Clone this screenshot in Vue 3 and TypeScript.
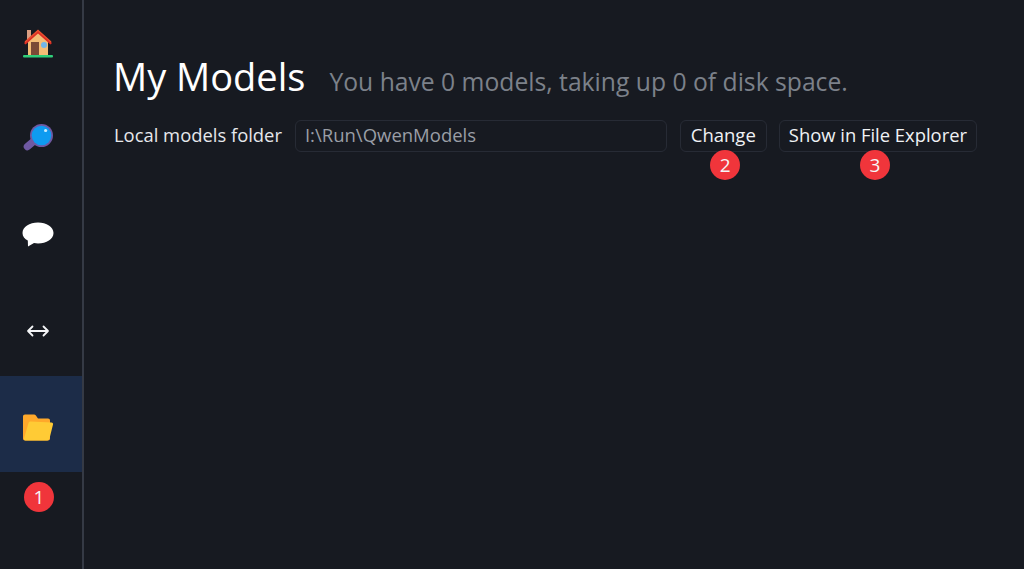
<template>
	<div class="app">
		<nav class="sidebar" aria-label="Main navigation">
			<div
				v-for="item in navItems"
				:key="item.id"
				class="nav-item"
				:class="{ 'nav-active': item.id === activeId }"
			>
				<svg v-if="item.id === 'home'" class="nav-icon" viewBox="0 0 32 32">
					<rect x="5" y="3" width="4" height="10" fill="#d99e82" />
					<path d="M6 14 16 5l10 9v14H6z" fill="#f4bd76" />
					<path d="M2 16 16 3l14 13-1.600 1.600L16 6.400 3.600 17.600z" fill="#dd2e24" />
					<path d="M3 15 16 3.500 29 15" fill="none" stroke="#e8502f" stroke-width="1.400" />
					<rect x="9" y="15" width="8" height="13" fill="#7b4a36" />
					<circle cx="22" cy="18" r="3" fill="#6fb6ea" />
					<rect x="1" y="28" width="30" height="2.400" rx="1" fill="#2fce7a" />
				</svg>
				<svg v-else-if="item.id === 'search'" class="nav-icon" viewBox="0 0 32 32">
					<path d="M12 18 5.500 23.500" stroke="#6f59a3" stroke-width="7.500" stroke-linecap="round" />
					<circle cx="19.500" cy="12.500" r="11.500" fill="#6f59a3" />
					<circle cx="19.500" cy="12.500" r="9.800" fill="#0e9bf0" />
					<circle cx="23.600" cy="7.500" r="1.600" fill="#c9ecff" />
				</svg>
				<svg v-else-if="item.id === 'chat'" class="nav-icon" viewBox="0 0 32 32">
					<path d="M16 3.500C7.500 3.500.5 8 .5 14c0 3.400 2.200 6 5.300 7.600l.2 5.900 6-3.400c1.300.3 2.700.4 4 .4 8.500 0 15.500-4.600 15.500-10.500S24.500 3.500 16 3.500z" fill="#fff" />
				</svg>
				<svg v-else-if="item.id === 'compare'" class="nav-icon" viewBox="0 0 32 32">
					<path d="M6 16h20M10.500 11.500 6 16l4.500 4.500M21.500 11.500 26 16l-4.500 4.500" fill="none" stroke="#f4f5f7" stroke-width="1.800" stroke-linecap="round" stroke-linejoin="round" />
				</svg>
				<svg v-else class="nav-icon" viewBox="0 0 32 32">
					<path d="M1 5.500c0-1.200.8-2 2-2h9c.8 0 1.400.3 1.900 1L16 7.500h10c1.200 0 2 .8 2 2v18c0 1.200-.8 2-2 2H3c-1.200 0-2-.8-2-2z" fill="#ffa92b" />
					<path d="M6.500 12c.3-1 1-1.500 2-1.500l21 1c1.200 0 1.800 1 1.500 2l-3.500 14c-.3 1.200-1.100 2-2.300 2H3.500c-1.200 0-1.800-.8-1.500-2z" fill="#ffcb35" />
				</svg>
			</div>
			<span class="step-badge badge-folder">1</span>
		</nav>

		<main class="content">
			<header class="page-head">
				<h1 class="page-title">My Models</h1>
				<span class="page-summary">You have {{ modelCount }} models, taking up {{ diskUsed }} of disk space.</span>
			</header>
			<div class="folder-row">
				<label class="folder-label" for="folder">Local models folder</label>
				<input id="folder" class="folder-input" type="text" :value="folderPath" />
				<button class="btn btn-change" type="button">
					Change
					<span class="step-badge badge-change">2</span>
				</button>
				<button class="btn btn-explorer" type="button">
					Show in File Explorer
					<span class="step-badge badge-explorer">3</span>
				</button>
			</div>
		</main>
	</div>
</template>

<script setup lang="ts">
type NavItem = {
	id: string
}

const navItems: NavItem[] = [
	{ id: 'home' },
	{ id: 'search' },
	{ id: 'chat' },
	{ id: 'compare' },
	{ id: 'models' },
]

const activeId = 'models'
const modelCount = 0
const diskUsed = '0'
const folderPath = 'I:\\Run\\QwenModels'
</script>

<style>
html,
body {
	margin: 0;
	background: #171a21;
	overflow: hidden;
}
</style>

<style scoped>
.app {
	display: flex;
	height: 569px;
	background: #171a21;
	color: #f0f2f5;
	font-family: "Open Sans", "Noto Sans", sans-serif;
	overflow: hidden;
}

.sidebar {
	position: relative;
	flex: none;
	width: 82px;
	border-right: 2px solid #353a45;
}

.nav-item {
	display: flex;
	align-items: center;
	justify-content: center;
	height: 96px;
	transform: translateY(-8px);
}

.nav-active {
	background: #1c2c48;
}

.nav-icon {
	width: 32px;
	height: 32px;
	margin: 5px 0 0 -6px;
}

.step-badge {
	position: absolute;
	display: flex;
	align-items: center;
	justify-content: center;
	width: 30px;
	height: 30px;
	border-radius: 50%;
	background: #f0353b;
	color: #f6f6f6;
	font-size: 19px;
	line-height: 1;
}

.badge-folder {
	left: 24px;
	top: 482px;
}

.badge-change,
.badge-explorer {
	left: 50%;
	top: 29px;
}

.badge-change {
	margin-left: -13px;
}

.badge-explorer {
	margin-left: -18px;
}

.content {
	flex: 1;
	min-width: 0;
	padding: 52px 47px 0 30px;
}

.page-head {
	display: flex;
	align-items: baseline;
	gap: 24px;
}

.page-title {
	margin: 0 0 0 -1px;
	font-size: 38px;
	font-weight: 400;
	line-height: 48px;
	color: #fff;
}

.page-summary {
	font-size: 24.7px;
	color: #7c818a;
}

.folder-row {
	display: flex;
	align-items: center;
	gap: 13px;
	margin-top: 20px;
}

.folder-label {
	margin-bottom: 3px;
	font-size: 18.4px;
	color: #e6e8ec;
}

.folder-input {
	flex: 1;
	min-width: 0;
	height: 32px;
	box-sizing: border-box;
	padding: 0 9px 3px;
	border: 1px solid #272b35;
	border-radius: 6px;
	background: transparent;
	color: #9a9ea6;
	font: inherit;
	font-size: 18.5px;
}

.btn {
	position: relative;
	height: 32px;
	box-sizing: border-box;
	padding: 0 9px 3px;
	border: 1px solid #272b35;
	border-radius: 6px;
	background: transparent;
	color: #f0f2f5;
	font: inherit;
	font-size: 18.5px;
}

.btn-change {
	padding: 0 10px 3px;
}

.btn-explorer {
	margin-left: -1px;
	font-size: 18.4px;
}
</style>
